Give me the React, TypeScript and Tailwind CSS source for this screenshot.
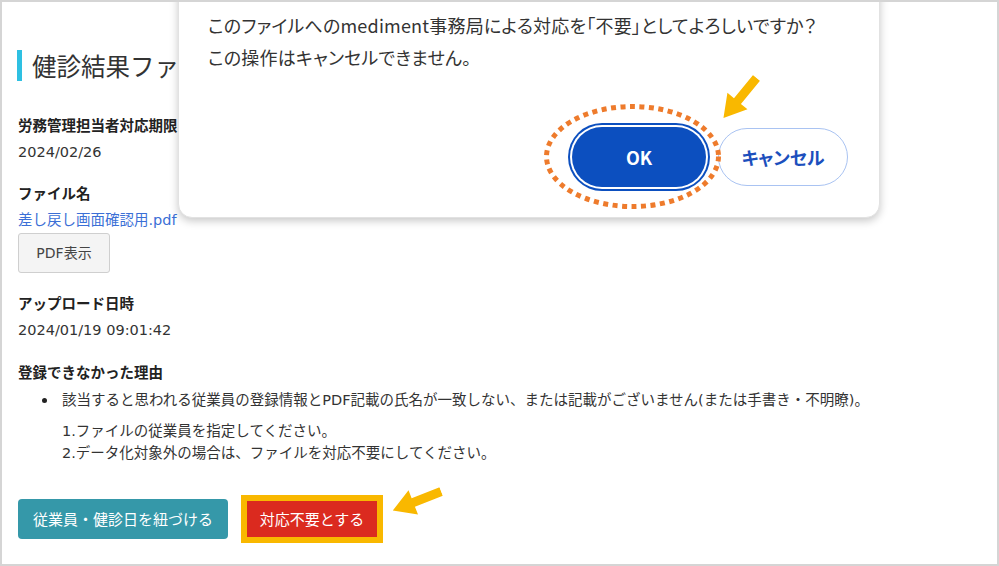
import React from 'react';

const jp = "font-['Noto_Sans_CJK_JP','Noto_Sans',sans-serif]";
const body = "font-['DejaVu_Sans','Noto_Sans_CJK_JP',sans-serif]";

// yellow call-out arrow, drawn pointing right then rotated
const Arrow: React.FC<{ className: string }> = ({ className }) => (
  <svg width="52" height="28" viewBox="0 0 52 28" className={`absolute ${className}`}>
    <polygon points="0,9.5 30,9.5 30,1 52,14 30,27 30,18.5 0,18.5" fill="#f9b800" />
  </svg>
);

export default function App() {
  return (
    <div className={`relative w-[999px] h-[566px] overflow-hidden border-2 border-[#d5d5d5] bg-white text-[#333] ${jp}`}>
      {/* page body */}
      <div className="pl-[16px] pt-[48px]">
        <div className="flex items-center h-[31px]">
          <div className="w-[5px] h-[31px] bg-[#2ec0e2] -ml-[1px]" />
          <h1 className="ml-[10px] text-[24.5px] leading-[31px] font-normal text-[#333] whitespace-nowrap">健診結果ファ</h1>
        </div>

        <div className={`mt-[32px] text-[14.5px] leading-[26px] ${body}`}>
          <p className="font-bold text-[#222]">労務管理担当者対応期限</p>
          <p>2024/02/26</p>

          <p className="mt-[16px] font-bold text-[#222]">ファイル名</p>
          <p className="text-[#3b6fd6]">差し戻し画面確認用.pdf</p>
          <button className="w-[92px] h-[40px] bg-[#f4f4f4] border border-[#cfcfcf] rounded-[3px] text-[14px] text-[#444]">
            PDF表示
          </button>

          <p className="mt-[18px] font-bold text-[#222]">アップロード日時</p>
          <p>2024/01/19 09:01:42</p>

          <p className="mt-[17px] font-bold text-[#222]">登録できなかった理由</p>
          <div className="mt-[1px] flex items-center pl-[24px]">
            <span className="w-[5px] h-[5px] rounded-full bg-[#222]" />
            <span className="ml-[15px]">
              該当すると思われる従業員の登録情報とPDF記載の氏名が一致しない、または記載がございません(または手書き・不明瞭)。
            </span>
          </div>
          <div className="mt-[7px] pl-[44px] leading-[22px]">
            <p>1.ファイルの従業員を指定してください。</p>
            <p>2.データ化対象外の場合は、ファイルを対応不要にしてください。</p>
          </div>
        </div>

        <div className="mt-[35px] flex items-center">
          <button className="w-[210px] h-[40px] rounded-[4px] bg-[#3598a9] text-white text-[15px]">
            従業員・健診日を紐づける
          </button>
          <button className="ml-[19px] w-[130px] h-[36px] bg-[#db2a1f] text-white text-[15px] outline-[6px] outline-solid outline-[#f9b800]">
            対応不要とする
          </button>
        </div>
      </div>

      {/* confirm dialog */}
      <div className="absolute left-[176px] top-[-20px] w-[702px] h-[236px] bg-white rounded-[14px] border border-[#e2e2e2] shadow-[0_3px_8px_rgba(0,0,0,0.22)] pl-[29px] pt-[26px] pr-[31px] [font-feature-settings:'palt']">
        <p className="text-[18px] leading-[32px] text-[#333] tracking-[0.2px]">
          このファイルへのmediment事務局による対応を「不要」としてよろしいですか？
        </p>
        <p className="text-[18px] leading-[32px] text-[#333] tracking-[0.2px]">この操作はキャンセルできません。</p>
        <div className="mt-[54px] flex justify-end items-center">
          <button className="w-[134px] h-[60px] rounded-full bg-[#0c4fbf] text-white text-[18px] font-bold shadow-[0_0_0_2px_#ffffff,0_0_0_4px_#0c4fbf]">
            OK
          </button>
          <button className="ml-[12px] w-[130px] h-[58px] rounded-full bg-white border-[1.5px] border-[#a9c3f2] text-[#1c4fbd] text-[18px] font-bold">
            キャンセル
          </button>
        </div>
      </div>

      {/* annotations */}
      <svg width="179" height="107" viewBox="0 0 179 107" className="absolute left-[541px] top-[101px]">
        <ellipse cx="89.5" cy="53.5" rx="86" ry="50" fill="none" stroke="#ee7b2c" strokeWidth="5" strokeDasharray="5 4.5" />
      </svg>
      <Arrow className="left-[712px] top-[82px] rotate-[129.5deg]" />
      <Arrow className="left-[389px] top-[485px] rotate-[158.6deg]" />
    </div>
  );
}
